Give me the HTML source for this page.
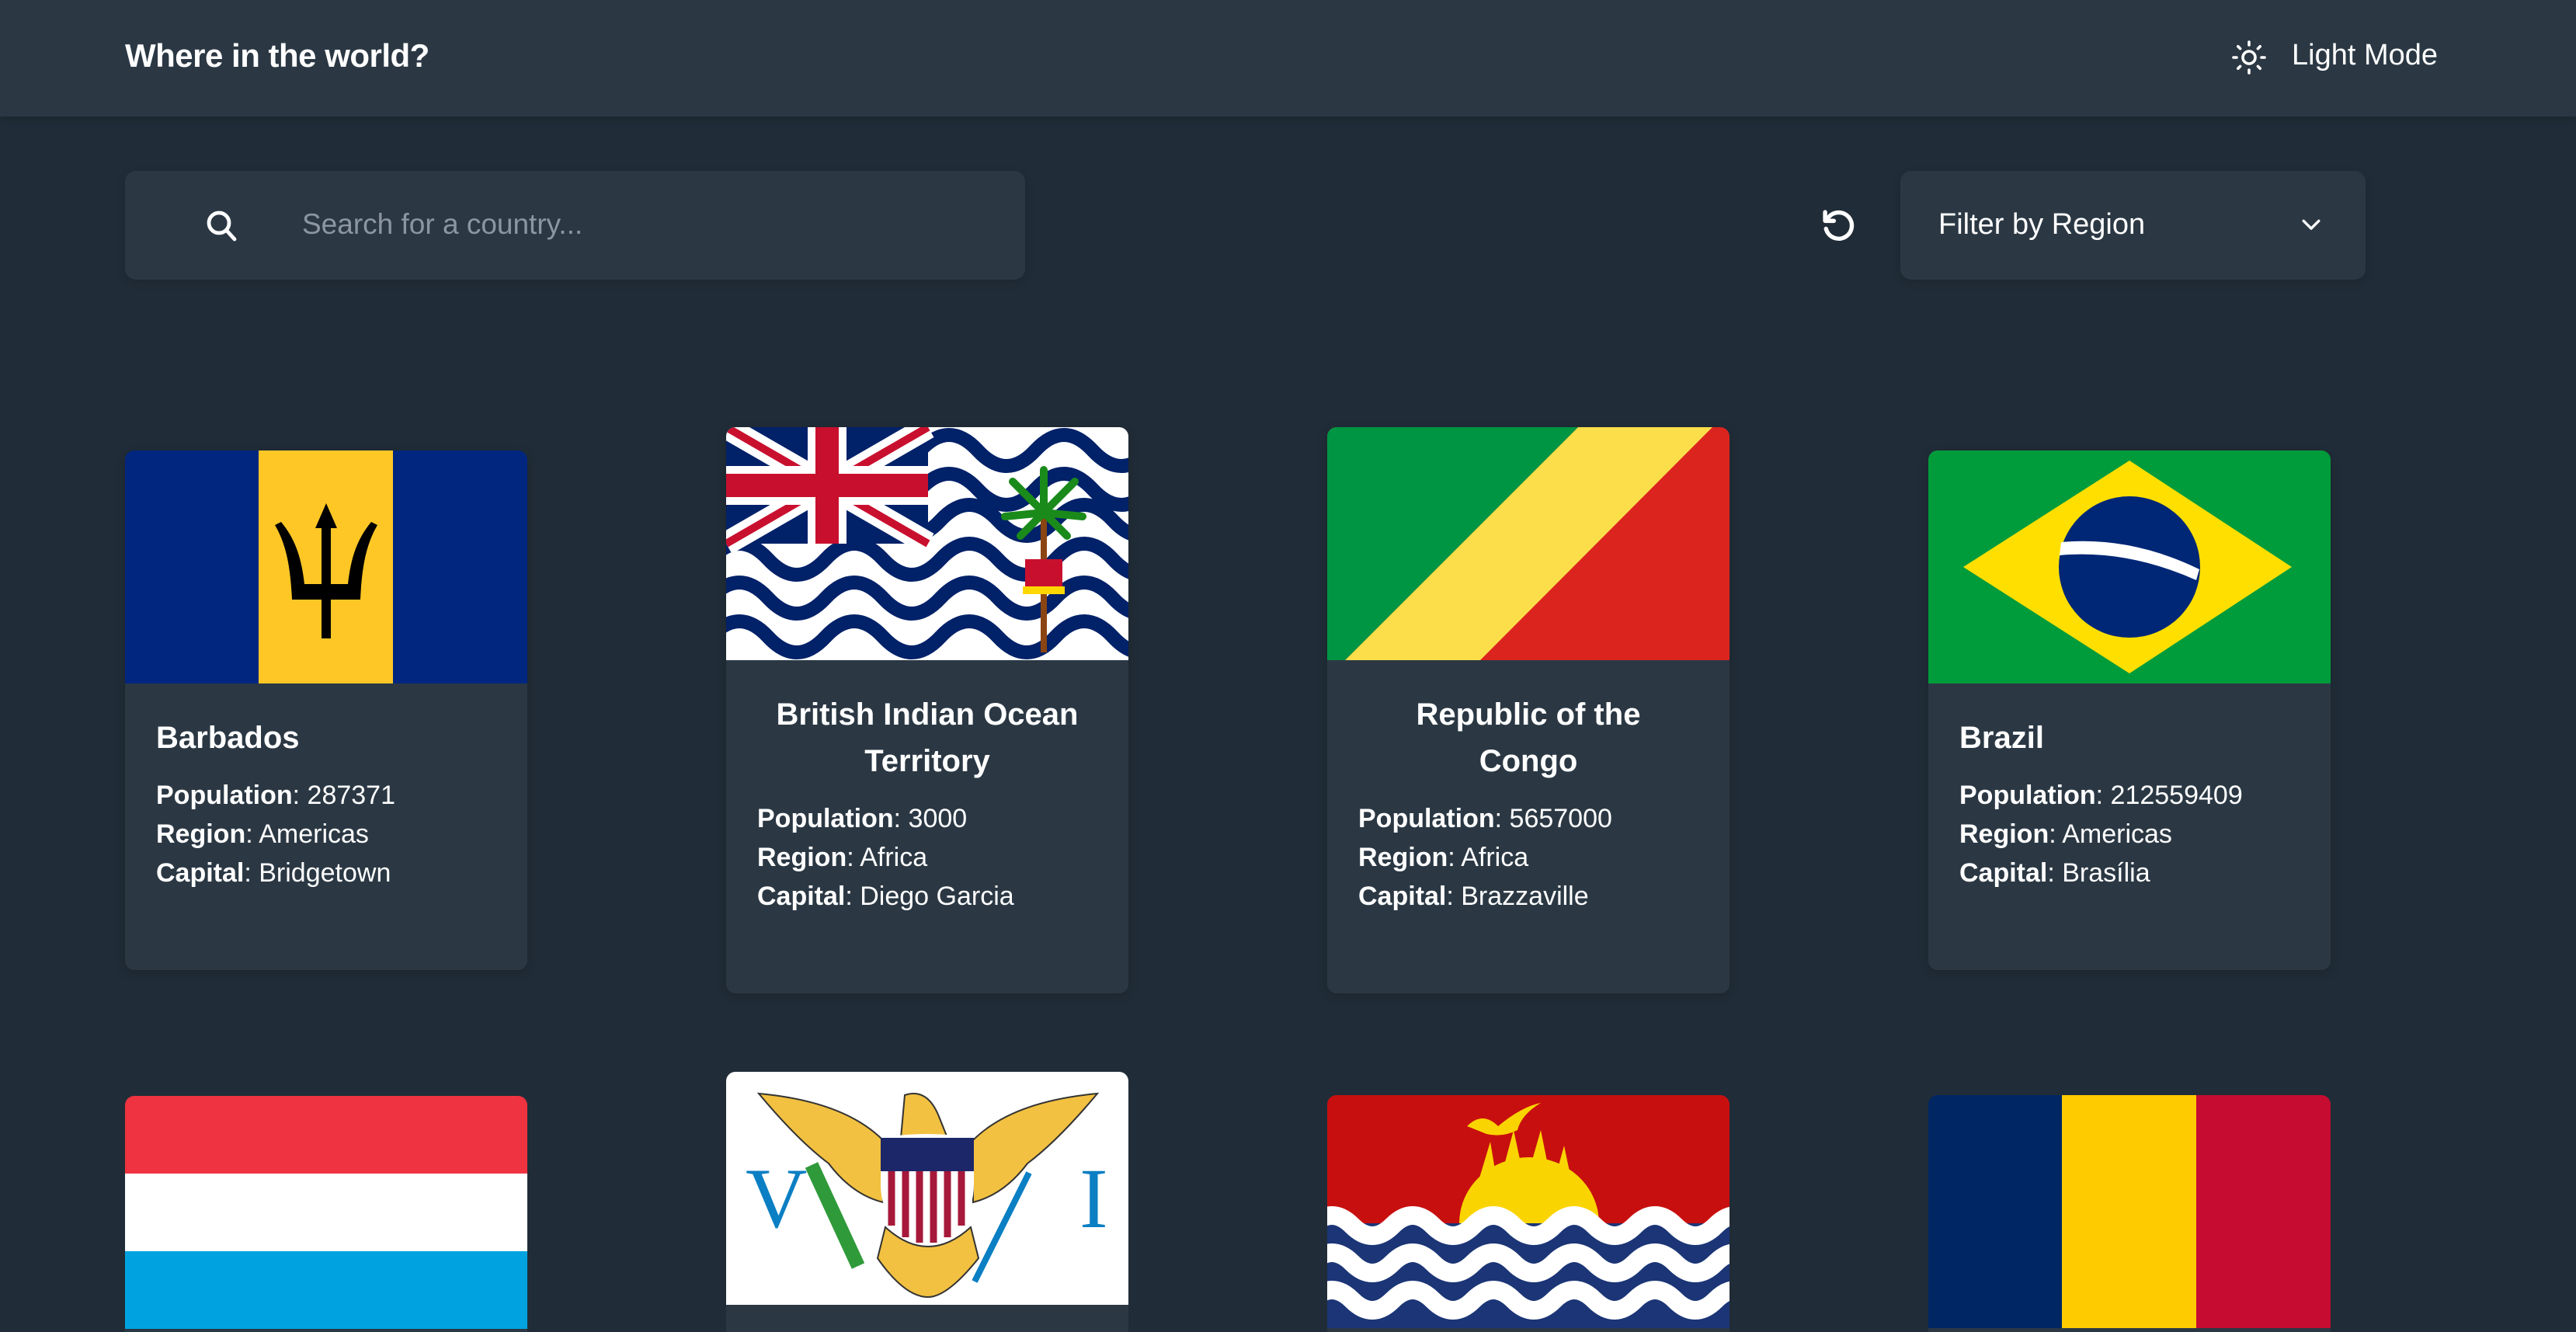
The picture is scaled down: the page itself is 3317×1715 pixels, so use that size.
<!DOCTYPE html>
<html><head><meta charset="utf-8"><style>
*{margin:0;padding:0;box-sizing:border-box}
html,body{width:3317px;height:1715px;overflow:hidden;background:#202c37;font-family:"Liberation Sans",sans-serif;color:#fff}
#wrap{position:relative;width:3317px;height:1715px;overflow:hidden}
.hdr{position:absolute;left:0;top:0;width:3317px;height:150px;background:#2b3844;box-shadow:0 4px 10px rgba(0,0,0,.15);z-index:2}
.title{position:absolute;left:161px;top:48px;font-size:42px;font-weight:bold;letter-spacing:-0.5px}
.mode{position:absolute;left:2951px;top:50px;font-size:38px}
.search{position:absolute;left:161px;top:220px;width:1159px;height:140px;background:#2b3844;border-radius:14px;box-shadow:0 4px 12px rgba(0,0,0,.12)}
.ph{position:absolute;left:228px;top:48px;font-size:37px;color:#8c96a0}
.filter{position:absolute;left:2447px;top:220px;width:599px;height:140px;background:#2b3844;border-radius:14px;box-shadow:0 4px 12px rgba(0,0,0,.12)}
.filter span{position:absolute;left:49px;top:48px;font-size:38px}
.card{position:absolute;width:518px;background:#2b3844;border-radius:12px;overflow:hidden;box-shadow:0 4px 14px rgba(0,0,0,.15)}
.card.r2{border-radius:12px 12px 0 0;box-shadow:none}
.card svg.f{display:block;width:518px;height:300px}
.body{padding:40px 40px 100px}
.body h2{font-size:40px;line-height:60px;font-weight:bold;margin-bottom:19px}
.body.c h2{text-align:center}
.body p{font-size:34px;line-height:50px;font-weight:300}
.body b{font-weight:600}
</style></head><body><div id="wrap">
<div class="hdr">
<div class="title">Where in the world?</div>
<svg style="position:absolute;left:2872px;top:50px" width="48" height="48" viewBox="0 0 24 24" fill="none" stroke="#fff" stroke-width="1.8" stroke-linecap="round"><circle cx="12" cy="12" r="4"/><path d="M12 2v2M12 20v2M4.9 4.9l1.4 1.4M17.7 17.7l1.4 1.4M2 12h2M20 12h2M4.9 19.1l1.4-1.4M17.7 6.3l1.4-1.4"/></svg>
<div class="mode">Light Mode</div>
</div>
<div class="search">
<svg style="position:absolute;left:100px;top:46px" width="48" height="48" viewBox="0 0 24 24" fill="none" stroke="#fff" stroke-width="2.4" stroke-linecap="round"><circle cx="10.5" cy="10.5" r="6.5"/><path d="M15.5 15.5l5 5.5"/></svg>
<div class="ph">Search for a country...</div>
</div>
<svg style="position:absolute;left:2340px;top:263px" width="54" height="54" viewBox="0 0 24 24" fill="none" stroke="#fff" stroke-width="2.4" stroke-linecap="round" stroke-linejoin="round"><path d="M5.5 9A7.5 7.5 0 1 1 5 14"/><path d="M4.5 4.5v5h5"/></svg>
<div class="filter"><span>Filter by Region</span>
<svg style="position:absolute;left:512px;top:56px" width="34" height="28" viewBox="0 0 24 20" fill="none" stroke="#fff" stroke-width="2.4" stroke-linecap="round" stroke-linejoin="round"><path d="M5 6l7 7 7-7"/></svg></div>

<div class="card" style="left:161px;top:580px">
<svg class="f" viewBox="0 0 518 300" preserveAspectRatio="none"><rect width="518" height="300" fill="#00267f"/><rect x="172" width="173" height="300" fill="#ffc726"/>
<path d="M259 68l-14 32h8v72h-22c-4-35-12-58-30-80l-8 4c14 24 20 52 22 96h38v50h12v-50h38c2-44 8-72 22-96l-8-4c-18 22-26 45-30 80h-22v-72h8z" fill="#000"/></svg>
<div class="body"><h2>Barbados</h2><p><b>Population</b>: 287371</p><p><b>Region</b>: Americas</p><p><b>Capital</b>: Bridgetown</p></div></div>

<div class="card" style="left:935px;top:550px">
<svg class="f" viewBox="0 0 518 300" preserveAspectRatio="none"><rect width="518" height="300" fill="#fff"/>
<g fill="none" stroke="#012169" stroke-width="18">
<path d="M-20 120q37-40 74 0t74 0 74 0 74 0 74 0 74 0 74 0 74 0"/>
<path d="M-20 170q37-40 74 0t74 0 74 0 74 0 74 0 74 0 74 0 74 0"/>
<path d="M-20 220q37-40 74 0t74 0 74 0 74 0 74 0 74 0 74 0 74 0"/>
<path d="M-20 270q37-40 74 0t74 0 74 0 74 0 74 0 74 0 74 0 74 0"/>
<path d="M250 30q37-40 74 0t74 0 74 0 74 0"/>
<path d="M250 80q37-40 74 0t74 0 74 0 74 0"/>
</g>
<rect width="260" height="150" fill="#012169"/>
<path d="M0 0L260 150M260 0L0 150" stroke="#fff" stroke-width="30"/>
<path d="M0 0L260 150M260 0L0 150" stroke="#c8102e" stroke-width="10"/>
<path d="M130 0v150M0 75h260" stroke="#fff" stroke-width="50"/>
<path d="M130 0v150M0 75h260" stroke="#c8102e" stroke-width="30"/>
<rect x="405" y="110" width="8" height="180" fill="#8b4513"/>
<g stroke="#1a8a1a" stroke-width="10" stroke-linecap="round"><path d="M409 110l-40-40M409 110l40-40M409 110l-50 5M409 110l50 5M409 110l0-55M409 110l-30 30M409 110l30 30"/></g>
<rect x="385" y="170" width="48" height="40" fill="#c8102e"/><rect x="382" y="205" width="54" height="10" fill="#ffd700"/></svg>
<div class="body c"><h2>British Indian Ocean Territory</h2><p><b>Population</b>: 3000</p><p><b>Region</b>: Africa</p><p><b>Capital</b>: Diego Garcia</p></div></div>

<div class="card" style="left:1709px;top:550px">
<svg class="f" viewBox="0 0 518 300" preserveAspectRatio="none"><rect width="518" height="300" fill="#dc241f"/><path d="M323 0h173L197 300H23z" fill="#fbde4a"/><path d="M0 0h323L23 300H0z" fill="#009543"/></svg>
<div class="body c"><h2>Republic of the<br>Congo</h2><p><b>Population</b>: 5657000</p><p><b>Region</b>: Africa</p><p><b>Capital</b>: Brazzaville</p></div></div>

<div class="card" style="left:2483px;top:580px">
<svg class="f" viewBox="0 0 518 300" preserveAspectRatio="none"><rect width="518" height="300" fill="#009c3b"/><path d="M259 13L468 150 259 287 45 150z" fill="#ffdf00"/><circle cx="259" cy="150" r="91" fill="#002776"/><path d="M171 118q90-8 178 35l-4 14q-90-40-176-32z" fill="#fff"/></svg>
<div class="body"><h2>Brazil</h2><p><b>Population</b>: 212559409</p><p><b>Region</b>: Americas</p><p><b>Capital</b>: Brasília</p></div></div>

<div class="card r2" style="left:161px;top:1411px;height:304px">
<svg class="f" viewBox="0 0 518 300" preserveAspectRatio="none"><rect width="518" height="100" fill="#ef3340"/><rect y="100" width="518" height="100" fill="#fff"/><rect y="200" width="518" height="100" fill="#00a3e0"/></svg>
</div>

<div class="card r2" style="left:935px;top:1380px;height:335px">
<svg class="f" viewBox="0 0 518 300" preserveAspectRatio="none"><rect width="518" height="300" fill="#fff"/>
<text x="25" y="200" font-family="Liberation Serif" font-size="110" fill="#0b7fc3">V</text><text x="455" y="200" font-family="Liberation Serif" font-size="110" fill="#0b7fc3">I</text>
<path d="M42 28q110 10 160 60l0 80q-40-10-70-50-40-30-90-90zM478 28q-110 10-160 60l0 80q40-10 70-50 40-30 90-90z" fill="#f2c141" stroke="#333" stroke-width="2"/>
<path d="M230 30q30-10 45 30l10 25h-60z" fill="#f2c141" stroke="#333" stroke-width="2"/>
<path d="M199 85q60-10 120 0v60q0 55-60 78-60-23-60-78z" fill="#fff"/><rect x="199" y="85" width="120" height="43" fill="#1c2769"/>
<g stroke="#a6193a" stroke-width="9"><path d="M213 128v70M231 128v85M249 128v92M267 128v92M285 128v85M303 128v70"/></g>
<path d="M205 200q55 50 110 0l10 40q-40 50-65 50-30 0-65-50z" fill="#f2c141" stroke="#333" stroke-width="2"/>
<path d="M110 120l60 130" stroke="#2f9a3a" stroke-width="18"/><path d="M390 130l-70 140" stroke="#0b7fc3" stroke-width="8"/></svg>
</div>

<div class="card r2" style="left:1709px;top:1410px;height:305px">
<svg class="f" viewBox="0 0 518 300" preserveAspectRatio="none"><rect width="518" height="300" fill="#1b3576"/><rect width="518" height="165" fill="#c80f0f"/>
<g fill="#fad400"><path d="M170 165a90 85 0 0 1 180 0z"/><path d="M180 160l30-100 10 60 20-75 15 70 20-70 15 75 15-55 20 95z"/><path d="M180 40q20-20 40 0 30-25 55-30-25 15-30 35-20 10-40 5z"/></g>
<g fill="none" stroke="#fff" stroke-width="24"><path d="M-20 168q26-26 52 0t52 0 52 0 52 0 52 0 52 0 52 0 52 0 52 0 52 0 52 0 52 0"/><path d="M-20 216q26-26 52 0t52 0 52 0 52 0 52 0 52 0 52 0 52 0 52 0 52 0 52 0 52 0"/><path d="M-20 264q26-26 52 0t52 0 52 0 52 0 52 0 52 0 52 0 52 0 52 0 52 0 52 0 52 0"/></g></svg>
</div>

<div class="card r2" style="left:2483px;top:1410px;height:305px">
<svg class="f" viewBox="0 0 518 300" preserveAspectRatio="none"><rect width="173" height="300" fill="#002664"/><rect x="172" width="174" height="300" fill="#fecb00"/><rect x="345" width="173" height="300" fill="#c60c30"/></svg>
</div>
</div></body></html>
